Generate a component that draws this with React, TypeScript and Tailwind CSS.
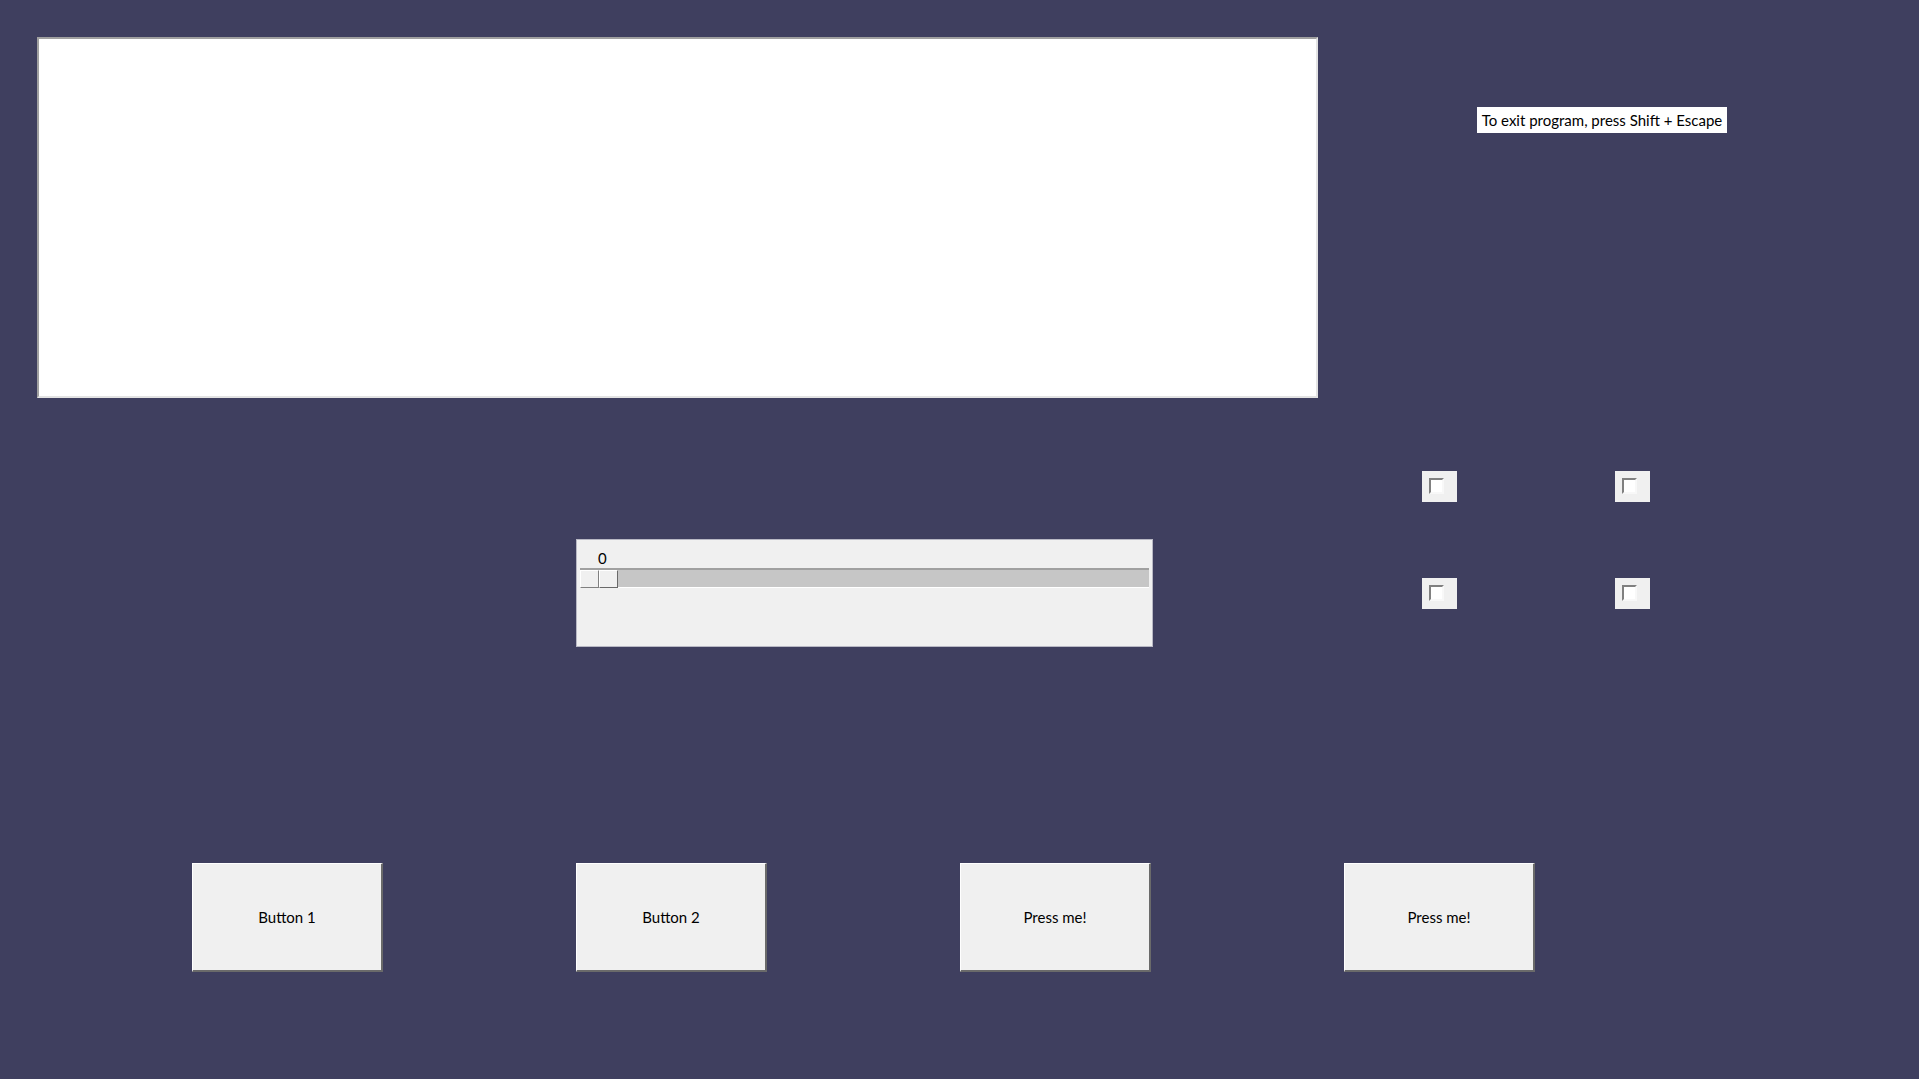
import { useState } from "react";

const FONT = "font-['Lato','Noto_Sans',sans-serif]";

function CheckCell({ checked, onToggle }: { checked: boolean; onToggle: () => void }) {
  return (
    <div className="flex h-[31px] w-[35px] items-start bg-[#f0f0f0] pl-[7px] pt-[7px]">
      <button
        onClick={onToggle}
        className="relative h-[16px] w-[15px] border-2 border-t-[#808080] border-l-[#808080] border-r-[#f8f8f8] border-b-[#f8f8f8] bg-white"
      >
        {checked && <span className="absolute inset-0 text-[10px] leading-[12px] text-black">✓</span>}
      </button>
    </div>
  );
}

function RaisedButton({ label }: { label: string }) {
  return (
    <button
      className={`h-[109px] w-[191px] border-t border-l border-t-white border-l-white border-r-2 border-b-2 border-r-[#6a6a6a] border-b-[#6a6a6a] bg-[#f0f0f0] text-[15px] text-black ${FONT}`}
    >
      {label}
    </button>
  );
}

export default function App() {
  const [checks, setChecks] = useState([false, false, false, false]);
  const value = 0;

  const toggle = (i: number) => setChecks((c) => c.map((v, j) => (j === i ? !v : v)));

  return (
    <div className={`h-[1079px] w-full overflow-hidden bg-[#3f3f5f] ${FONT}`}>
      {/* top row: canvas + hint */}
      <div className="flex items-start pl-[37px] pt-[37px]">
        <div className="h-[361px] w-[1281px] border-2 border-t-[#a0a0a0] border-l-[#a0a0a0] border-r-[#e3e3e3] border-b-[#e3e3e3] bg-white" />
        <div className="ml-[159px] mt-[70px] flex h-[26px] w-[250px] items-center justify-center whitespace-nowrap bg-white text-[15px] text-black">
          To exit program, press Shift + Escape
        </div>
      </div>

      {/* middle row: scale + checkboxes */}
      <div className="mt-[73px] flex items-start">
        <div className="ml-[576px] mt-[68px] h-[108px] w-[577px] border border-[#b8b8c4] bg-[#f0f0f0] px-[3px] pt-[9px]">
          <div className="pl-[18px] text-[15px] leading-[18px] text-black">{value}</div>
          <div className="mt-[1px] flex h-[20px] items-center border-t-2 border-b border-t-[#a0a0a0] border-b-white bg-[#c6c6c6]">
            <div className="flex h-[18px] w-[38px]">
              <div className="h-full w-[19px] border-t border-l border-r border-b border-t-white border-l-white border-r-[#808080] border-b-[#808080] bg-[#f0f0f0]" />
              <div className="h-full w-[19px] border-t border-l border-r border-b border-t-white border-l-white border-r-[#696969] border-b-[#696969] bg-[#f0f0f0]" />
            </div>
          </div>
        </div>

        <div className="ml-[269px] grid grid-cols-[35px_35px] gap-x-[158px] gap-y-[76px]">
          {checks.map((c, i) => (
            <CheckCell key={i} checked={c} onToggle={() => toggle(i)} />
          ))}
        </div>
      </div>

      {/* bottom row: buttons */}
      <div className="mt-[216px] flex gap-[193px] pl-[192px]">
        <RaisedButton label="Button 1" />
        <RaisedButton label="Button 2" />
        <RaisedButton label="Press me!" />
        <RaisedButton label="Press me!" />
      </div>
    </div>
  );
}
